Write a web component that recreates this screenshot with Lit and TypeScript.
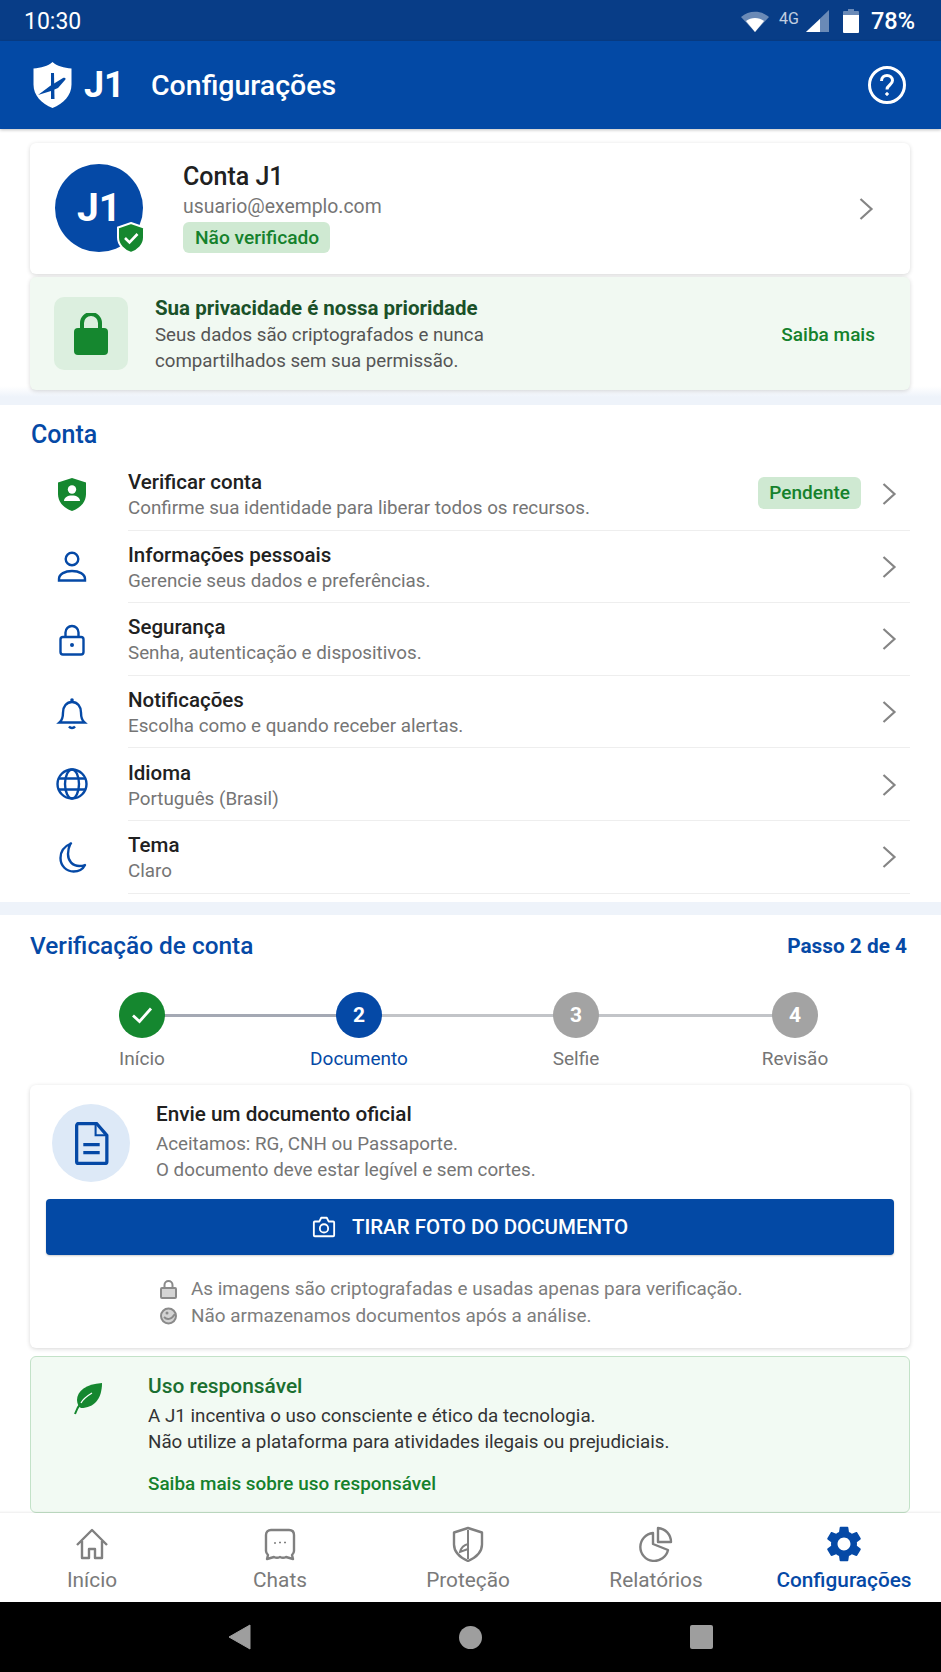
import { LitElement, html, css, svg } from 'lit';
import { customElement } from 'lit/decorators.js';

const BLUE = '#0549a6';
const GREEN = '#15872f';
const GREY = '#808080';

const chevron = html`<svg class="chev" width="16" height="24" viewBox="0 0 16 24" fill="none" stroke="#858585" stroke-width="2.2"><path d="M2.5 2l11 10-11 10"/></svg>`;

const rowIcons = {
  shield: svg`<path d="M16 0l14 4.500v11.500C30 24.500 24 30 16 33 8 30 2 24.500 2 16V4.500z" fill="${GREEN}"/><circle cx="16" cy="11.500" r="4.200" fill="#fff"/><path d="M8 23c0-3.500 3.500-5.500 8-5.500s8 2 8 5.500z" fill="#fff"/>`,
  person: svg`<g fill="none" stroke="${BLUE}" stroke-width="2.400"><circle cx="16" cy="9" r="6.300"/><path d="M3 30.500v-1.500c0-5 6-8 13-8s13 3 13 8v1.500z"/></g>`,
  lock: svg`<g fill="none" stroke="${BLUE}" stroke-width="2.400"><path d="M9.500 14V9.500a6.500 6.500 0 0 1 13 0V14"/><rect x="4.500" y="14" width="23" height="17.500" rx="2.500"/></g><circle cx="16" cy="22" r="2" fill="${BLUE}"/>`,
  bell: svg`<g fill="none" stroke="${BLUE}" stroke-width="2.400"><path d="M3.500 26.500c3-2.500 3.500-5 3.500-10 0-6 3.500-10.500 9-10.500s9 4.500 9 10.500c0 5 .5 7.500 3.500 10z"/><path d="M13 30.500c1.500 2 4.500 2 6 0"/></g><circle cx="16" cy="4" r="1.800" fill="${BLUE}"/>`,
  globe: svg`<g fill="none" stroke="${BLUE}" stroke-width="2.400"><circle cx="16" cy="16" r="14.500"/><ellipse cx="16" cy="16" rx="7" ry="14.500"/><path d="M3 10.500h26M3 21.500h26"/></g>`,
  moon: svg`<path d="M15 2.500C9 5 4.500 10 4.500 17c0 8 6 13.500 13 13.500 5 0 9.500-2.500 11.500-6.500-2 .8-4 1-5.500 1-7 0-11.500-5-11.500-12 0-4 1-7.500 2.500-10.500z" fill="none" stroke="${BLUE}" stroke-width="2.400" stroke-linejoin="round"/>`,
};

const navIcons = {
  home: svg`<path d="M3 19L18 4l15 15M8 15v17h7v-9h6v9h7V15" fill="none" stroke="${GREY}" stroke-width="2.400" stroke-linejoin="round"/>`,
  chats: svg`<path d="M9 4h18c3 0 5 2 5 5v16c0 2-1 3-2 4l1 4-7-2c-2 1-4 1-6 0-2 1-4 1-6 0l-7 2 1-4c-1-1-2-2-2-4V9c0-3 2-5 5-5z" fill="none" stroke="${GREY}" stroke-width="2.400" stroke-linejoin="round"/><path d="M12 17h2M17 16.500h2M22 16.500h2" stroke="${GREY}" stroke-width="1.600"/>`,
  shield: svg`<path d="M18 2l14 4.500v12c0 8-6 13-14 16.500C10 31.500 4 26.500 4 18.500v-12z" fill="none" stroke="${GREY}" stroke-width="2.400" stroke-linejoin="round"/><path d="M18 4v29M18 18c-4 1-7 4-8 8l8-3" fill="none" stroke="${GREY}" stroke-width="2"/>`,
  pie: svg`<g fill="none" stroke="${GREY}" stroke-width="2.400" stroke-linejoin="round"><path d="M15 7a14 14 0 1 0 15 17L15 18z"/><path d="M20 2a14 14 0 0 1 13 14H20z"/></g>`,
  gear: svg`<path fill="${BLUE}" transform="translate(-3.600 -3.600) scale(1.800)" d="M19.140 12.940c.04-.3.06-.61.06-.94 0-.32-.02-.64-.07-.94l2.030-1.580c.18-.14.23-.41.12-.61l-1.920-3.320c-.12-.22-.37-.29-.59-.22l-2.390.96c-.5-.38-1.030-.7-1.620-.94l-.36-2.540c-.04-.24-.24-.41-.48-.41h-3.840c-.24 0-.43.17-.47.41l-.36 2.540c-.59.24-1.130.57-1.620.94l-2.390-.96c-.22-.08-.47 0-.59.22L2.740 8.870c-.12.21-.08.47.12.61l2.030 1.580c-.05.3-.09.63-.09.94s.02.64.07.94l-2.030 1.580c-.18.14-.23.41-.12.61l1.920 3.320c.12.22.37.29.59.22l2.390-.96c.5.38 1.030.7 1.620.94l.36 2.540c.05.24.24.41.48.41h3.840c.24 0 .44-.17.47-.41l.36-2.540c.59-.24 1.130-.56 1.620-.94l2.390.96c.22.08.47 0 .59-.22l1.920-3.320c.12-.22.07-.47-.12-.61l-2.010-1.580zM12 15.600c-1.980 0-3.600-1.620-3.600-3.600s1.620-3.600 3.600-3.600 3.600 1.620 3.600 3.600-1.620 3.600-3.600 3.600z"/>`,
};

const rows = [
  { icon: 'shield', title: 'Verificar conta', sub: 'Confirme sua identidade para liberar todos os recursos.', badge: 'Pendente' },
  { icon: 'person', title: 'Informações pessoais', sub: 'Gerencie seus dados e preferências.' },
  { icon: 'lock', title: 'Segurança', sub: 'Senha, autenticação e dispositivos.' },
  { icon: 'bell', title: 'Notificações', sub: 'Escolha como e quando receber alertas.' },
  { icon: 'globe', title: 'Idioma', sub: 'Português (Brasil)' },
  { icon: 'moon', title: 'Tema', sub: 'Claro' },
];

const steps = [
  { label: 'Início', state: 'done', mark: '' },
  { label: 'Documento', state: 'current', mark: '2' },
  { label: 'Selfie', state: 'todo', mark: '3' },
  { label: 'Revisão', state: 'todo', mark: '4' },
];

const tabs = [
  { icon: 'home', label: 'Início' },
  { icon: 'chats', label: 'Chats' },
  { icon: 'shield', label: 'Proteção' },
  { icon: 'pie', label: 'Relatórios' },
  { icon: 'gear', label: 'Configurações', active: true },
];

@customElement('app-root')
export class AppRoot extends LitElement {
  static styles = css`
    :host {
      display: block;
      font-family: Roboto, 'Liberation Sans', sans-serif;
      color: #212121;
    }

    .page {
      width: 941px;
      height: 1672px;
      display: flex;
      flex-direction: column;
      overflow: hidden;
      background: #fff;
    }

    .status {
      height: 41px;
      flex: none;
      box-sizing: border-box;
      background: #083d87;
      color: #fff;
      display: flex;
      align-items: center;
      padding: 1px 26px 0 24px;
      font-size: 23px;
    }
    .status .spacer { flex: 1; }
    .status .fourg { font-size: 16px; width: 20px; opacity: 0.75; margin: -6px 7px 0 10px; }
    .status .pct { font-weight: 500; font-size: 23.500px; margin-left: 12px; }
    .status .batt { margin-left: 14px; }

    .appbar {
      height: 88px;
      flex: none;
      background: #0349a5;
      color: #fff;
      display: flex;
      align-items: center;
      padding: 0 35px 0 33px;
      box-shadow: 0 1px 3px rgba(0, 0, 0, 0.25);
      z-index: 1;
    }
    .appbar .j1 { font-size: 36px; font-weight: 700; margin-left: 12px; width: 67px; }
    .appbar .title { font-size: 28.500px; font-weight: 500; flex: 1; }

    .content {
      flex: 1;
      min-height: 0;
      overflow: hidden;
    }

    .top {
      padding: 14px 31px 7px 30px;
      display: flex;
      flex-direction: column;
      gap: 3px;
      background: linear-gradient(#fff 96%, #eef3fa);
    }

    .card {
      background: #fff;
      border-radius: 6px;
      box-shadow: 0 1px 4px rgba(0, 0, 0, 0.16);
    }

    .profile {
      height: 131px;
      display: flex;
      align-items: center;
      padding: 0 36px 0 25px;
    }
    .avatar {
      width: 88px;
      height: 88px;
      flex: none;
      position: relative;
      margin-top: -1px;
      border-radius: 50%;
      background: #0549a6;
      color: #fff;
      font-size: 39px;
      font-weight: 700;
      display: flex;
      align-items: center;
      justify-content: center;
    }
    .avatar svg { position: absolute; right: -3px; bottom: -2px; }
    .profile .info { flex: 1; margin: -2px 0 0 40px; }
    .profile .name { font-size: 25px; font-weight: 500; line-height: 28px; }
    .profile .mail { font-size: 19.400px; color: #757575; line-height: 24px; margin-top: 4px; }

    .pill {
      display: inline-block;
      background: #cfe9d2;
      color: #15812c;
      font-weight: 500;
      border-radius: 6px;
    }
    .profile .pill { font-size: 19.200px; line-height: 31px; padding: 0 11px 0 12px; margin-top: 3px; }

    .privacy {
      height: 113px;
      background: #f1f9f2;
      display: flex;
      align-items: center;
      padding: 0 35px 0 24px;
    }
    .privacy .tile {
      width: 74px;
      height: 73px;
      border-radius: 10px;
      background: #dcefdf;
      display: flex;
      align-items: center;
      justify-content: center;
      flex: none;
    }
    .privacy .text { flex: 1; margin-left: 27px; }
    .privacy .head { font-size: 20.500px; font-weight: 700; color: #1a5129; line-height: 26px; padding-top: 1px; }
    .privacy .body { font-size: 18.700px; color: #555; line-height: 26px; margin-top: 1px; }
    .green-link { color: #15812c; font-weight: 500; font-size: 19px; }
    .privacy .green-link { margin-top: 2px; }

    .band {
      background: #fff;
      border-top: 8px solid #eef3fa;
      border-bottom: 13px solid #eef3fa;
      padding: 0 31px 9px 0;
    }
    .sec-title { font-size: 24.400px; font-weight: 500; color: #0549a6; }
    .band .sec-title { font-size: 25px; padding: 16px 0 0 31px; line-height: 27px; height: 36.500px; }

    .row {
      height: 72.600px;
      box-sizing: border-box;
      display: flex;
      align-items: center;
    }
    .row .ico { width: 128px; display: flex; justify-content: center; flex: none; padding: 2px 0 0 16px; box-sizing: border-box; }
    .row .wrap {
      flex: 1;
      height: 100%;
      display: flex;
      align-items: center;
      border-bottom: 1.500px solid #eeeeee;
      padding-right: 13px;
    }
    .row .text { flex: 1; padding-top: 3px; }
    .row .chev { margin-top: 2px; }
    .row .t { font-size: 20.500px; font-weight: 500; line-height: 26px; }
    .row .s { font-size: 18.800px; color: #757575; line-height: 24px; margin-top: 1px; }
    .row .pill { font-size: 19px; line-height: 32px; padding: 0 11px; margin-right: 20px; }

    .verify { padding: 14px 31px 0 30px; }
    .verify .head {
      display: flex;
      justify-content: space-between;
      align-items: center;
      height: 32px;
      padding: 0 3px 2px 0;
    }
    .verify .step-of { font-size: 20.800px; font-weight: 700; color: #0549a6; padding-top: 2px; }

    .stepper {
      position: relative;
      display: grid;
      grid-template-columns: 217px 217px 219px 1fr;
      margin: 29px 0 0 48px;
      height: 93px;
    }
    .stepper .line {
      position: absolute;
      left: 64px;
      width: 652px;
      top: 22px;
      height: 3px;
      background: linear-gradient(90deg, #a4a9b4 33%, #c2c4c8 33%);
    }
    .step { position: relative; width: 128px; display: flex; flex-direction: column; align-items: center; }
    .dot {
      width: 46px;
      height: 46px;
      border-radius: 50%;
      display: flex;
      align-items: center;
      justify-content: center;
      color: #fff;
      font-size: 21px;
      font-weight: 700;
    }
    .done .dot { background: #15872f; }
    .current .dot { background: #0549a6; }
    .todo .dot { background: #a3a3a3; }
    .step .lbl { font-size: 19px; color: #757575; line-height: 24px; margin-top: 9px; white-space: nowrap; }
    .current .lbl { color: #0549a6; }

    .doc { height: 263px; margin-top: 0; padding: 19px 16px 0 16px; box-sizing: border-box; }
    .doc .top-row { display: flex; height: 95px; }
    .doc .circle {
      width: 78px;
      height: 78px;
      border-radius: 50%;
      background: #dde9f7;
      display: flex;
      align-items: center;
      justify-content: center;
      flex: none;
      margin-left: 6px;
    }
    .doc .txt { margin: -1px 0 0 26px; }
    .doc .t { font-size: 20.700px; font-weight: 500; line-height: 22px; }
    .doc .s { font-size: 18.800px; color: #757575; line-height: 26px; margin-top: 6px; }
    .doc .s + .s { margin-top: 0; }
    .btn {
      height: 56px;
      background: #0349a5;
      color: #fff;
      border: none;
      border-radius: 4px;
      width: 100%;
      display: flex;
      align-items: center;
      justify-content: center;
      gap: 16px;
      font: 500 20.500px Roboto, sans-serif;
      box-shadow: 0 1px 2px rgba(0, 0, 0, 0.2);
    }
    .notes { margin: 22px 0 0 114px; display: flex; flex-direction: column; gap: 3px; }
    .note { display: flex; align-items: center; gap: 14px; font-size: 18.900px; color: #7d7d7d; line-height: 24px; }

    .resp {
      margin-top: 8px;
      height: 157px;
      box-sizing: border-box;
      border: 1.500px solid #c3e2c8;
      border-radius: 6px;
      background: #f2faf3;
      display: flex;
      padding: 15.500px 0 0 43px;
    }
    .resp .leaf { margin-top: 10.500px; flex: none; }
    .resp .txt { margin-left: 46px; }
    .resp .t { font-size: 20.900px; font-weight: 500; color: #1b6f30; line-height: 26px; }
    .resp .s { font-size: 18.800px; color: #333; line-height: 26px; margin-top: 4px; }
    .resp .s + .s { margin-top: 0; }
    .resp .green-link { display: block; font-size: 18.900px; margin-top: 16px; line-height: 26px; }

    .tabs {
      height: 89px;
      flex: none;
      background: #fff;
      display: grid;
      grid-template-columns: repeat(5, 188px);
      margin-left: -2px;
      box-shadow: 0 -1px 2px rgba(0, 0, 0, 0.08);
      z-index: 1;
    }
    .tab {
      display: flex;
      flex-direction: column;
      align-items: center;
      padding-top: 13px;
      color: #7a7a7a;
      font-size: 20.800px;
      line-height: 24px;
    }
    .tab svg { margin-bottom: 6px; }
    .tab.active { color: #0549a6; font-weight: 500; }

    .sysbar {
      height: 70px;
      flex: none;
      background: #000;
      display: flex;
      align-items: center;
      justify-content: center;
      gap: 208px;
      padding-top: 0;
    }
    .sysbar .circle { width: 23px; height: 23px; border-radius: 50%; background: #9e9e9e; }
    .sysbar .square { width: 23px; height: 24px; border-radius: 2px; background: #9e9e9e; }
  `;

  renderStatus() {
    return html`
      <div class="status">
        <span>10:30</span>
        <span class="spacer"></span>
        <svg width="28" height="22" viewBox="0 0 28 22"><path d="M0 7c8-7 20-7 28 0L14 22z" fill="#fff" opacity=".4"/><path d="M5 11c5-4 13-4 18 0l-9 11z" fill="#fff"/></svg>
        <span class="fourg">4G</span>
        <svg width="23" height="22" viewBox="0 0 23 22"><path d="M23 0v22H0z" fill="#fff" opacity=".4"/><path d="M14 9v13H0z" fill="#fff"/></svg>
        <svg class="batt" width="16" height="24" viewBox="0 0 16 24"><path d="M5 0h6v2h4a1 1 0 0 1 1 1v4H0V3a1 1 0 0 1 1-1h4z" fill="#fff" opacity=".4"/><path d="M0 6h16v17a1 1 0 0 1-1 1H1a1 1 0 0 1-1-1z" fill="#fff"/></svg>
        <span class="pct">78%</span>
      </div>
    `;
  }

  renderAppbar() {
    return html`
      <div class="appbar">
        <svg width="39" height="46" viewBox="0 0 39 46">
          <path d="M19.500 0C24 4 31 6 38.500 6.500v16c0 11-8 19-19 23.500C8.500 41.500.5 33.500.5 22.500v-16C8 6 15 4 19.500 0z" fill="#fff"/>
          <path d="M18 11h3l.5 26H18z" fill="#0349a5"/>
          <path d="M5 33l12-9 13-8c2-1 3.500.5 2 2l-7 8-7 3z" fill="#0349a5"/>
        </svg>
        <span class="j1">J1</span>
        <span class="title">Configurações</span>
        <svg width="38" height="38" viewBox="0 0 38 38" fill="none" stroke="#fff" stroke-width="3">
          <circle cx="19" cy="19" r="17.500"/>
          <path d="M13.500 15c0-3.500 2.500-5.500 5.500-5.500s5.500 2 5.500 5c0 4.500-5.500 4.500-5.500 9"/>
          <circle cx="19" cy="28" r="1.300" fill="#fff" stroke-width="1"/>
        </svg>
      </div>
    `;
  }

  renderTop() {
    return html`
      <div class="top">
        <div class="card profile">
          <div class="avatar">
            J1
            <svg width="30" height="32" viewBox="0 0 30 32">
              <path d="M15 1l13 4.500v10C28 23 22 28.500 15 31 8 28.500 2 23 2 15.500v-10z" fill="${GREEN}" stroke="#fff" stroke-width="2"/>
              <path d="M9 16l4.500 4.500L21.500 12" fill="none" stroke="#fff" stroke-width="2.600"/>
            </svg>
          </div>
          <div class="info">
            <div class="name">Conta J1</div>
            <div class="mail">usuario@exemplo.com</div>
            <span class="pill">Não verificado</span>
          </div>
          ${chevron}
        </div>
        <div class="card privacy">
          <div class="tile">
            <svg width="36" height="42" viewBox="0 0 36 42">
              <path d="M9 18v-8a9 9 0 0 1 18 0v8" fill="none" stroke="${GREEN}" stroke-width="4"/>
              <rect x="1" y="15" width="34" height="27" rx="4" fill="${GREEN}"/>
            </svg>
          </div>
          <div class="text">
            <div class="head">Sua privacidade é nossa prioridade</div>
            <div class="body">Seus dados são criptografados e nunca<br />compartilhados sem sua permissão.</div>
          </div>
          <span class="green-link">Saiba mais</span>
        </div>
      </div>
    `;
  }

  renderRows() {
    return html`
      <div class="band">
        <div class="sec-title">Conta</div>
        ${rows.map(
          (r) => html`
            <div class="row">
              <div class="ico">
                <svg width="32" height="34" viewBox="0 0 32 34">${rowIcons[r.icon as keyof typeof rowIcons]}</svg>
              </div>
              <div class="wrap">
                <div class="text">
                  <div class="t">${r.title}</div>
                  <div class="s">${r.sub}</div>
                </div>
                ${r.badge ? html`<span class="pill">${r.badge}</span>` : ''}
                ${chevron}
              </div>
            </div>
          `
        )}
      </div>
    `;
  }

  renderVerify() {
    return html`
      <div class="verify">
        <div class="head">
          <span class="sec-title">Verificação de conta</span>
          <span class="step-of">Passo 2 de 4</span>
        </div>
        <div class="stepper">
          <div class="line"></div>
          ${steps.map(
            (s) => html`
              <div class="step ${s.state}">
                <div class="dot">
                  ${s.mark ||
                  html`<svg width="22" height="18" viewBox="0 0 22 18" fill="none" stroke="#fff" stroke-width="2.800"><path d="M2 9.500l6.500 6L20 2.500"/></svg>`}
                </div>
                <div class="lbl">${s.label}</div>
              </div>
            `
          )}
        </div>
        <div class="card doc">
          <div class="top-row">
            <div class="circle">
              <svg width="35" height="43" viewBox="0 0 34 42" fill="none" stroke="#0549a6" stroke-width="3.200">
                <path d="M2.500 3.500a2 2 0 0 1 2-2H22L32 13v25.500a2 2 0 0 1-2 2H4.500a2 2 0 0 1-2-2z" stroke-linejoin="round"/>
                <path d="M21 2v11h11" stroke-width="2"/>
                <path d="M9 22h16M9 30h16"/>
              </svg>
            </div>
            <div class="txt">
              <div class="t">Envie um documento oficial</div>
              <div class="s">Aceitamos: RG, CNH ou Passaporte.</div>
              <div class="s">O documento deve estar legível e sem cortes.</div>
            </div>
          </div>
          <button class="btn">
            <svg width="24" height="22" viewBox="0 0 26 22" fill="none" stroke="#fff" stroke-width="2">
              <path d="M2 6a1 1 0 0 1 1-1h5l2-4h6l2 4h5a1 1 0 0 1 1 1v14a1 1 0 0 1-1 1H3a1 1 0 0 1-1-1z" stroke-linejoin="round"/>
              <circle cx="13" cy="12.500" r="4.500"/>
            </svg>
            TIRAR FOTO DO DOCUMENTO
          </button>
          <div class="notes">
            <div class="note">
              <svg width="17" height="20" viewBox="0 0 17 20" fill="none" stroke="#8a8a8a" stroke-width="2"><path d="M4.500 9V6a4 4 0 0 1 8 0v3"/><rect x="1" y="9" width="15" height="10" rx="1" fill="#d4d4d4"/></svg>
              As imagens são criptografadas e usadas apenas para verificação.
            </div>
            <div class="note">
              <svg width="17" height="20" viewBox="0 0 17 20"><circle cx="8.500" cy="10" r="7.500" fill="#d4d4d4" stroke="#8a8a8a" stroke-width="2"/><path d="M4 11c3 3 7 3 11-3" fill="none" stroke="#8a8a8a" stroke-width="2"/><circle cx="7" cy="7" r="1.500" fill="#8a8a8a"/></svg>
              Não armazenamos documentos após a análise.
            </div>
          </div>
        </div>
        <div class="resp">
          <svg class="leaf" width="28" height="32" viewBox="0 0 28 32">
            <path d="M28 0C12 1 3 8 3 17c0 4 2 7 4 8C20 25 28 16 28 0z" fill="${GREEN}"/>
            <path d="M1 31c2-6 3.500-8 6-11" fill="none" stroke="${GREEN}" stroke-width="2"/>
            <path d="M7 20c2-4 6-7 11-10" fill="none" stroke="#fff" stroke-width="1.300"/>
          </svg>
          <div class="txt">
            <div class="t">Uso responsável</div>
            <div class="s">A J1 incentiva o uso consciente e ético da tecnologia.</div>
            <div class="s">Não utilize a plataforma para atividades ilegais ou prejudiciais.</div>
            <span class="green-link">Saiba mais sobre uso responsável</span>
          </div>
        </div>
      </div>
    `;
  }

  renderTabs() {
    return html`
      <div class="tabs">
        ${tabs.map(
          (t) => html`
            <div class="tab ${t.active ? 'active' : ''}">
              <svg width="36" height="36" viewBox="0 0 36 36">${navIcons[t.icon as keyof typeof navIcons]}</svg>
              ${t.label}
            </div>
          `
        )}
      </div>
    `;
  }

  render() {
    return html`
      <div class="page">
        ${this.renderStatus()} ${this.renderAppbar()}
        <div class="content">${this.renderTop()} ${this.renderRows()} ${this.renderVerify()}</div>
        ${this.renderTabs()}
        <div class="sysbar">
          <svg width="23" height="26" viewBox="0 0 23 26"><path d="M22 1v24L1 13z" fill="#9e9e9e" stroke="#9e9e9e" stroke-linejoin="round"/></svg>
          <div class="circle"></div>
          <div class="square"></div>
        </div>
      </div>
    `;
  }
}
